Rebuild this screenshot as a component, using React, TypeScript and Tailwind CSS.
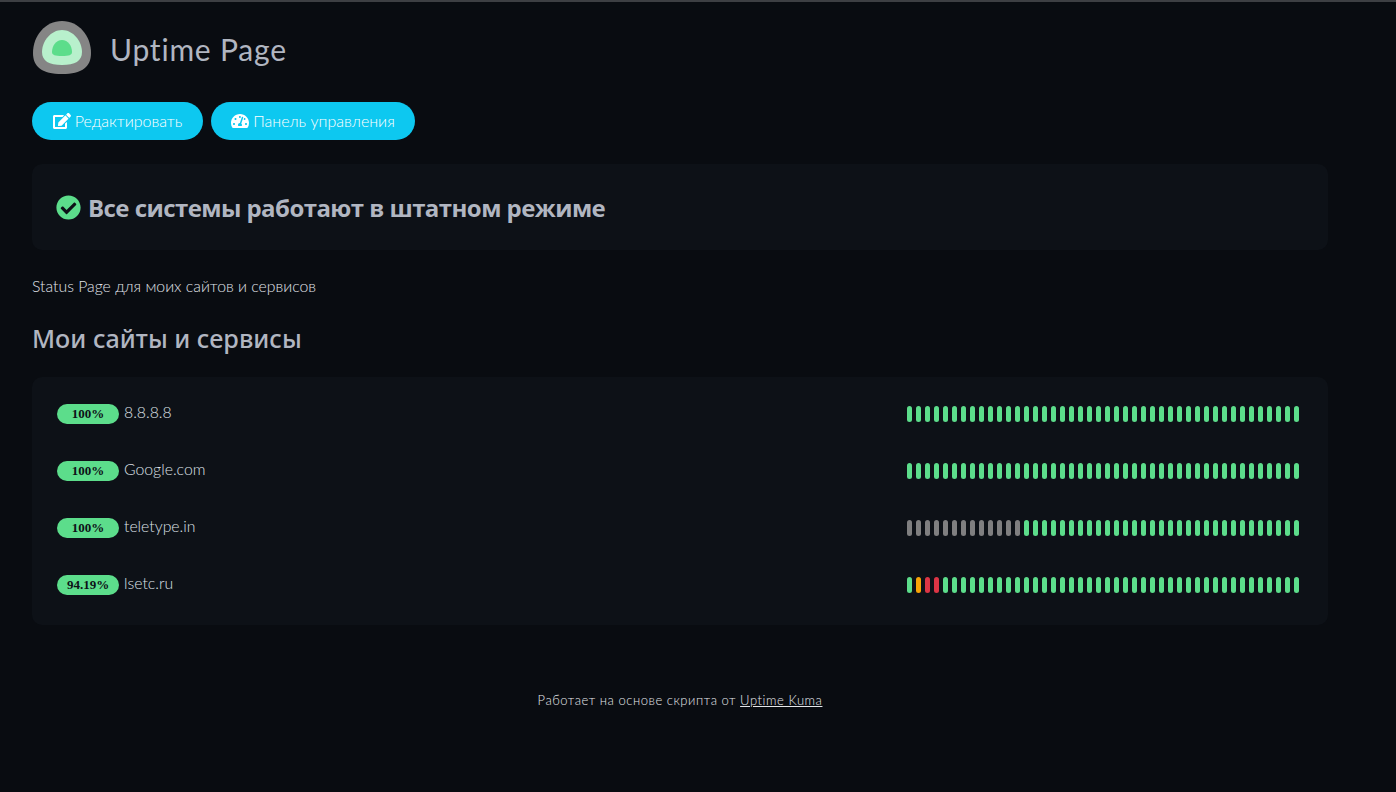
import { FaCheckCircle, FaEdit, FaTachometerAlt } from 'react-icons/fa';

const monitors = [
  { pct: '100%', name: '8.8.8.8', grey: 0 },
  { pct: '100%', name: 'Google.com', grey: 0 },
  { pct: '100%', name: 'teletype.in', grey: 13 },
  { pct: '94.19%', name: 'lsetc.ru', grey: 0 },
];

function beatClass(row: number, i: number, grey: number) {
  if (i < grey) return 'bg-[#7f7f80]';
  if (row === 3 && i === 1) return 'bg-[#f8a306]';
  if (row === 3 && (i === 2 || i === 3)) return 'bg-[#dc3545]';
  return 'bg-[#5cdd8b]';
}

function Logo() {
  return (
    <svg width="60" height="56" viewBox="0 0 60 56" className="shrink-0">
      <path d="M30 1C47 1 59 16 59 33C59 47 50 54 30 54C10 54 1 47 1 33C1 16 13 1 30 1Z" fill="#858585" />
      <path d="M30 10C41 10 50 21 50 32C50 41 43 45 30 45C17 45 10 41 10 32C10 21 19 10 30 10Z" fill="#b8f0cc" />
      <path d="M30 20C36 20 40 26 40 32C40 35 37 36 30 36C23 36 20 35 20 32C20 26 24 20 30 20Z" fill="#5cdd8b" />
    </svg>
  );
}

export default function App() {
  return (
    <div className="min-h-[792px] bg-[#090c11] border-t-2 border-[#3d3f43] font-['Lato','Noto_Sans',sans-serif] text-[#b1b6c1]">
      <div className="w-[1296px] ml-8">
        <div className="flex items-center h-[58px] mt-[17px]">
          <Logo />
          <h1 className="ml-[18px] pt-[2px] text-[30px] font-normal tracking-[0.8px] leading-none">Uptime Page</h1>
        </div>

        <div className="flex gap-2 mt-[25px]">
          <button className="h-[38px] w-[171px] rounded-full bg-[#0dc8f0] text-white font-light text-[16px] flex items-center justify-center gap-[4px]">
            <FaEdit className="text-[18px]" />
            Редактировать
          </button>
          <button className="h-[38px] w-[204px] rounded-full bg-[#0dc8f0] text-white font-light text-[16px] flex items-center justify-center gap-[4px]">
            <FaTachometerAlt className="text-[18px]" />
            Панель управления
          </button>
        </div>

        <div className="mt-[24px] h-[86px] rounded-[10px] bg-[#0d1117] flex items-center pl-[24px]">
          <FaCheckCircle className="text-[25px] text-[#5cdd8b]" />
          <span className="ml-[7px] pt-[2px] text-[24px] font-bold font-['Open_Sans',sans-serif] tracking-[-0.56px]">
            Все системы работают в штатном режиме
          </span>
        </div>

        <p className="mt-[26px] text-[15.8px] font-light leading-[20px] text-[#e0e3e9]">Status Page для моих сайтов и сервисов</p>

        <h2 className="mt-[26px] text-[25.2px] font-medium leading-[32px] font-['Noto_Sans',sans-serif]">Мои сайты и сервисы</h2>

        <div className="mt-[23px] h-[248px] rounded-[10px] bg-[#0d1117] pt-[8px] px-[25px] flex flex-col">
          {monitors.map((m, row) => (
            <div key={m.name} className="h-[57px] flex items-center">
              <span className="w-[62px] h-5 rounded-full bg-[#5cdd8b] text-[#0d1117] font-['Liberation_Serif',serif] font-bold text-[13px] flex items-center justify-center">
                {m.pct}
              </span>
              <span className="ml-[5px] text-[15.8px] font-light mb-[4px] text-[#dde0e6]">{m.name}</span>
              <div className="ml-auto mr-[4px] flex gap-[4px]">
                {Array.from({ length: 44 }, (_, i) => (
                  <div key={i} className={`w-[5px] h-4 rounded-full ${beatClass(row, i, m.grey)}`} />
                ))}
              </div>
            </div>
          ))}
        </div>

        <footer className="mt-[66px] text-center text-[13px] font-light tracking-[0.55px] text-[#e5e7eb]">
          Работает на основе скрипта от <a className="underline">Uptime Kuma</a>
        </footer>
      </div>
    </div>
  );
}
